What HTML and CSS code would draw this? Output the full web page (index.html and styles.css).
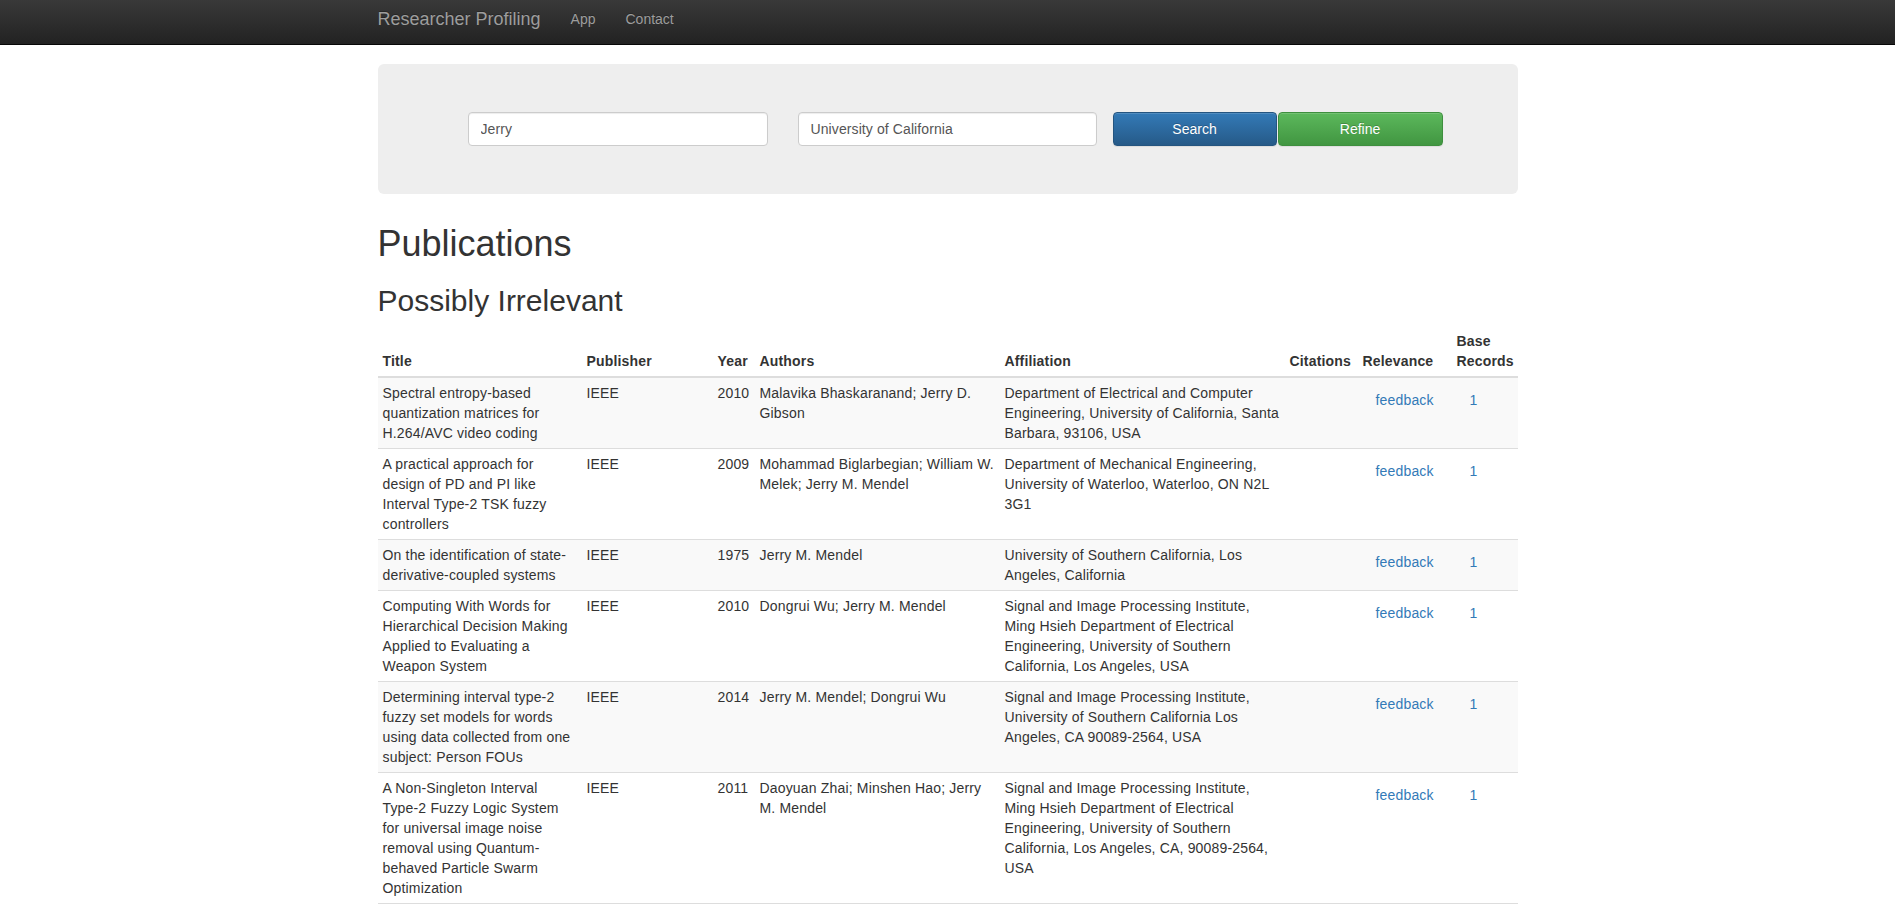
FILE: index.html
```html
<!DOCTYPE html>
<html lang="en">
<head>
<meta charset="utf-8">
<title>Researcher Profiling</title>
<link rel="stylesheet" href="styles.css">
</head>
<body>
<nav class="navbar">
  <div class="container nav-inner">
    <a class="brand" href="#">Researcher Profiling</a>
    <ul class="nav-links">
      <li><a href="#">App</a></li>
      <li><a href="#">Contact</a></li>
    </ul>
  </div>
</nav>

<main class="container">
  <div class="jumbotron">
    <form class="search-form">
      <input class="field field-name" type="text" value="Jerry">
      <input class="field field-aff" type="text" value="University of California">
      <button class="btn btn-primary" type="button">Search</button>
      <button class="btn btn-success" type="button">Refine</button>
    </form>
  </div>

  <h1 class="title">Publications</h1>
  <h2 class="subtitle">Possibly Irrelevant</h2>

  <table class="pubs">
    <colgroup>
      <col class="c-title">
      <col class="c-pub">
      <col class="c-year">
      <col class="c-auth">
      <col class="c-aff">
      <col class="c-cit">
      <col class="c-rel">
      <col class="c-base">
    </colgroup>
    <thead>
      <tr>
        <th>Title</th>
        <th>Publisher</th>
        <th>Year</th>
        <th>Authors</th>
        <th>Affiliation</th>
        <th>Citations</th>
        <th>Relevance</th>
        <th>Base Records</th>
      </tr>
    </thead>
    <tbody>
      <tr>
        <td>Spectral entropy-based quantization matrices for H.264/AVC video coding</td>
        <td>IEEE</td>
        <td>2010</td>
        <td>Malavika Bhaskaranand; Jerry D. Gibson</td>
        <td>Department of Electrical and Computer Engineering, University of California, Santa Barbara, 93106, USA</td>
        <td></td>
        <td><a class="btn-link" href="#">feedback</a></td>
        <td><a class="btn-link" href="#">1</a></td>
      </tr>
      <tr>
        <td>A practical approach for design of PD and PI like Interval Type-2 TSK fuzzy controllers</td>
        <td>IEEE</td>
        <td>2009</td>
        <td>Mohammad Biglarbegian; William W. Melek; Jerry M. Mendel</td>
        <td>Department of Mechanical Engineering, University of Waterloo, Waterloo, ON N2L 3G1</td>
        <td></td>
        <td><a class="btn-link" href="#">feedback</a></td>
        <td><a class="btn-link" href="#">1</a></td>
      </tr>
      <tr>
        <td>On the identification of state-derivative-coupled systems</td>
        <td>IEEE</td>
        <td>1975</td>
        <td>Jerry M. Mendel</td>
        <td>University of Southern California, Los Angeles, California</td>
        <td></td>
        <td><a class="btn-link" href="#">feedback</a></td>
        <td><a class="btn-link" href="#">1</a></td>
      </tr>
      <tr>
        <td>Computing With Words for Hierarchical Decision Making Applied to Evaluating a Weapon System</td>
        <td>IEEE</td>
        <td>2010</td>
        <td>Dongrui Wu; Jerry M. Mendel</td>
        <td>Signal and Image Processing Institute, Ming Hsieh Department of Electrical Engineering, University of Southern California, Los Angeles, USA</td>
        <td></td>
        <td><a class="btn-link" href="#">feedback</a></td>
        <td><a class="btn-link" href="#">1</a></td>
      </tr>
      <tr>
        <td>Determining interval type-2 fuzzy set models for words using data collected from one subject: Person FOUs</td>
        <td>IEEE</td>
        <td>2014</td>
        <td>Jerry M. Mendel; Dongrui Wu</td>
        <td>Signal and Image Processing Institute, University of Southern California Los Angeles, CA 90089-2564, USA</td>
        <td></td>
        <td><a class="btn-link" href="#">feedback</a></td>
        <td><a class="btn-link" href="#">1</a></td>
      </tr>
      <tr>
        <td>A Non-Singleton Interval Type-2 Fuzzy Logic System for universal image noise removal using Quantum-behaved Particle Swarm Optimization</td>
        <td>IEEE</td>
        <td>2011</td>
        <td>Daoyuan Zhai; Minshen Hao; Jerry M. Mendel</td>
        <td>Signal and Image Processing Institute, Ming Hsieh Department of Electrical Engineering, University of Southern California, Los Angeles, CA, 90089-2564, USA</td>
        <td></td>
        <td><a class="btn-link" href="#">feedback</a></td>
        <td><a class="btn-link" href="#">1</a></td>
      </tr>
    </tbody>
  </table>
</main>
</body>
</html>
```

FILE: styles.css
```css
* {
  box-sizing: border-box;
}

html {
  overflow: hidden;
}

body {
  margin: 0;
  font-family: "Liberation Sans", Arial, Helvetica, sans-serif;
  font-size: 14px;
  line-height: 20px;
  color: #333;
  background: #fff;
}

a {
  color: #337ab7;
  text-decoration: none;
}

.container {
  width: 1170px;
  margin: 0 auto;
  padding: 0 15px;
}

/* Navbar */
.navbar {
  height: 45px;
  background-image: linear-gradient(to bottom, #393939 0, #222 100%);
  border-bottom: 1px solid #080808;
  margin-bottom: 19px;
}

.nav-inner {
  display: flex;
  align-items: flex-start;
}

.brand {
  margin-left: -15px;
  padding: 9px 15px 0;
  font-size: 18px;
  line-height: 20px;
  color: #9d9d9d;
  text-shadow: 0 -1px 0 rgba(0, 0, 0, .25);
}

.nav-links {
  display: flex;
  list-style: none;
  margin: 0;
  padding: 0;
}

.nav-links a {
  display: block;
  padding: 9px 15px 0;
  line-height: 20px;
  color: #9d9d9d;
  text-shadow: 0 -1px 0 rgba(0, 0, 0, .25);
}

/* Jumbotron search */
.jumbotron {
  background: #eee;
  border-radius: 6px;
  padding: 48px 0 48px 90px;
  margin-bottom: 30px;
}

.search-form {
  display: flex;
  align-items: center;
  margin: 0;
}

.field {
  height: 34px;
  padding: 6px 12px;
  font-family: inherit;
  font-size: 14px;
  line-height: 20px;
  letter-spacing: 0.1px;
  color: #555;
  background: #fff;
  border: 1px solid #ccc;
  border-radius: 4px;
  box-shadow: inset 0 1px 1px rgba(0, 0, 0, .075);
  outline: none;
}

.field-name {
  width: 300px;
  margin-right: 30px;
}

.field-aff {
  width: 299px;
  margin-right: 16px;
}

.btn {
  height: 34px;
  padding: 6px 12px;
  font-family: inherit;
  font-size: 14px;
  line-height: 20px;
  color: #fff;
  border: 1px solid transparent;
  border-radius: 4px;
  text-shadow: 0 -1px 0 rgba(0, 0, 0, .2);
  box-shadow: inset 0 1px 0 rgba(255, 255, 255, .15), 0 1px 1px rgba(0, 0, 0, .075);
  cursor: pointer;
}

.btn-primary {
  width: 164px;
  margin-right: 1px;
  background-image: linear-gradient(to bottom, #337ab7 0, #265a88 100%);
  border-color: #245580;
}

.btn-success {
  width: 165px;
  background-image: linear-gradient(to bottom, #5cb85c 0, #419641 100%);
  border-color: #3e8f3e;
}

/* Headings */
.title {
  margin: 30px 0 10px;
  font-size: 36px;
  font-weight: 500;
  line-height: 1.1;
}

.subtitle {
  margin: 20px 0 9px;
  font-size: 30px;
  font-weight: 500;
  line-height: 1.1;
}

/* Table */
.pubs {
  width: 100%;
  table-layout: fixed;
  border-collapse: collapse;
  border-spacing: 0;
  margin-bottom: 20px;
  letter-spacing: 0.17px;
}

.c-title { width: 204px; }
.c-pub { width: 131px; }
.c-year { width: 42px; }
.c-auth { width: 245px; }
.c-aff { width: 285px; }
.c-cit { width: 73px; }
.c-rel { width: 94px; }
.c-base { width: 66px; }

.pubs th,
.pubs td {
  padding: 5px;
  line-height: 20px;
  text-align: left;
}

.pubs th {
  vertical-align: bottom;
  font-weight: bold;
  border-bottom: 2px solid #ddd;
}

.pubs td {
  vertical-align: top;
  border-top: 1px solid #ddd;
}

.pubs tbody tr:nth-of-type(odd) {
  background: #f9f9f9;
}

.pubs tbody tr:last-child td {
  border-bottom: 1px solid #ddd;
}

.btn-link {
  display: inline-block;
  padding: 6px 12px;
  border: 1px solid transparent;
  line-height: 20px;
  color: #337ab7;
  white-space: nowrap;
}
```
